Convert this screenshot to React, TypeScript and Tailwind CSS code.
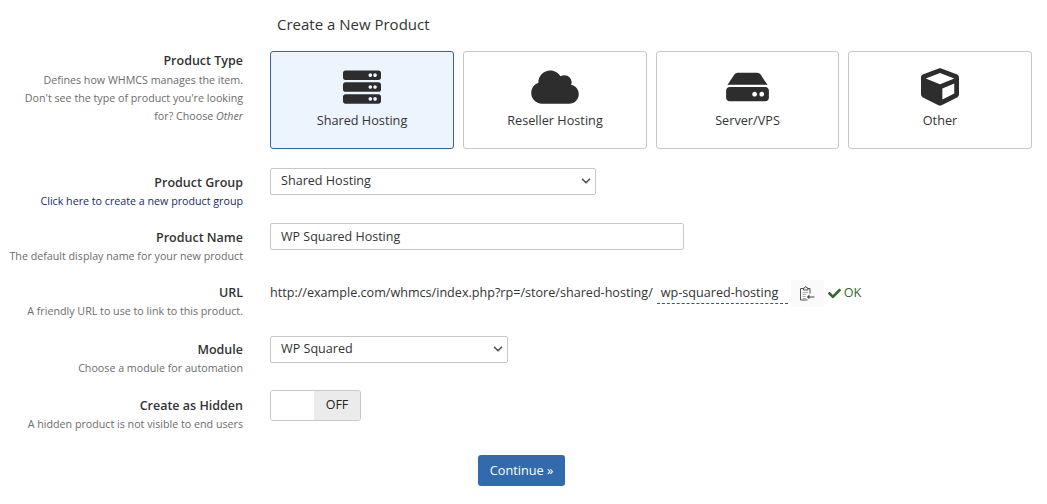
import { FaServer, FaCloud, FaHdd, FaCube, FaCheck } from "react-icons/fa";
import { ChevronDown } from "lucide-react";
import type { ReactNode } from "react";

const font = "font-['Open_Sans',sans-serif]";

function Label({ title, spaced, children }: { title: string; spaced?: boolean; children: ReactNode }) {
  return (
    <div className="w-[243px] shrink-0 text-right">
      <div className={`${spaced ? "mb-px" : ""} text-[12.5px] leading-[18px] font-semibold text-[#333]`}>{title}</div>
      <div className="text-[10.7px] leading-[18px] text-[#6c6c6c]">{children}</div>
    </div>
  );
}

function Select({ value, width }: { value: string; width: string }) {
  return (
    <div className={`relative ml-[27px] h-[27px] ${width}`}>
      <select className="h-full w-full appearance-none rounded-[2px] border border-[#c8c8c8] bg-white pl-[10px] text-[12.6px] text-[#333]">
        <option>{value}</option>
      </select>
      <ChevronDown className="pointer-events-none absolute top-[7px] right-[3px] h-[14px] w-[14px] text-[#555]" strokeWidth={3} />
    </div>
  );
}

function PasteIcon() {
  return (
    <svg viewBox="0 0 16 16" className="h-[16px] w-[16px]" fill="none" stroke="#555" strokeWidth="1">
      <path d="M11 8.5V3.5H9M4.5 3.5H1.5V15H8.5" />
      <path d="M4.5 5V3H5.5C5.7 1.2 7.8 1.2 8 3H9V5Z" fill="#f2f2f2" stroke="#444" strokeWidth="0.9" />
      <path d="M3.5 7.5H9M3.5 9.5H7M3.5 11.5H6.5M3.5 13.5H7" stroke="#999" strokeWidth="0.8" />
      <path d="M15.5 11.4H10.4V9.6L7.9 11.9L10.4 14.2V12.4H15.5Z" fill="#444" stroke="none" />
    </svg>
  );
}

const types = [
  { name: "Shared Hosting", icon: <FaServer className="h-[38px] w-[38px]" />, active: true, w: "w-[184px]" },
  { name: "Reseller Hosting", icon: <FaCloud className="h-[38px] w-[48px]" />, active: false, w: "w-[184px]" },
  { name: "Server/VPS", icon: <FaHdd className="h-[38px] w-[43px]" />, active: false, w: "w-[183px]" },
  { name: "Other", icon: <FaCube className="h-[38px] w-[38px]" />, active: false, w: "w-[184px]" },
];

export default function App() {
  return (
    <div className={`${font} h-[504px] w-[1047px] overflow-hidden bg-white text-[#333]`}>
      <h2 className="pt-[15px] pl-[277px] text-[15px] leading-[19px] font-normal text-[#333]">
        Create a New Product
      </h2>

      {/* Product type */}
      <div className="mt-[17px] flex">
        <div className="pt-px">
          <Label title="Product Type" spaced>
            Defines how WHMCS manages the item.
            <br />
            Don't see the type of product you're looking
            <br />
            for? Choose <em>Other</em>
          </Label>
        </div>
        <div className="ml-[27px] flex gap-[9px]">
          {types.map((t) => (
            <div
              key={t.name}
              className={`flex h-[98px] ${t.w} flex-col items-center rounded-[3px] border pt-[15px] ${
                t.active ? "border-[#336699] bg-[#ecf4fe]" : "border-[#c8c8c8] bg-white"
              }`}
            >
              <div className="flex h-[40px] items-center text-[#2d2d2d]">{t.icon}</div>
              <div className="mt-[4px] text-[12.7px] leading-[18px] text-[#333]">{t.name}</div>
            </div>
          ))}
        </div>
      </div>

      {/* Product group */}
      <div className="mt-[18px] flex">
        <div className="pt-[7px]">
          <Label title="Product Group">
            <a className="text-[#1a2a6c]">Click here to create a new product group</a>
          </Label>
        </div>
        <Select value="Shared Hosting" width="w-[326px]" />
      </div>

      {/* Product name */}
      <div className="mt-[13px] flex">
        <div className="pt-[6px]">
          <Label title="Product Name">The default display name for your new product</Label>
        </div>
        <input
          readOnly
          value="WP Squared Hosting"
          className="ml-[27px] h-[27px] w-[414px] rounded-[2px] border border-[#c8c8c8] bg-white px-[10px] text-[12.5px] text-[#333]"
        />
      </div>

      {/* URL */}
      <div className="mt-[18px] flex">
        <div className="pt-px">
          <Label title="URL">A friendly URL to use to link to this product.</Label>
        </div>
        <div className="ml-[27px] flex h-[20px] items-center text-[12.6px] text-[#333]">
          <span>http://example.com/whmcs/index.php?rp=/store/shared-hosting/</span>
          <span className="ml-[4px] w-[131px] border-b border-dashed border-[#2a5a8c] pl-[4px] leading-[21px]">
            wp-squared-hosting
          </span>
          <span className="ml-[3px] flex h-[27px] w-[33px] items-center justify-center bg-[#fafafa]">
            <PasteIcon />
          </span>
          <FaCheck className="ml-[4px] h-[13px] w-[13px] text-[#2e6b2e]" />
          <span className="ml-[3px] text-[#2e6b2e]">OK</span>
        </div>
      </div>

      {/* Module */}
      <div className="mt-[15px] flex">
        <div className="pt-[6px]">
          <Label title="Module">Choose a module for automation</Label>
        </div>
        <Select value="WP Squared" width="w-[238px]" />
      </div>

      {/* Hidden */}
      <div className="mt-[13px] flex">
        <div className="pt-[7px]">
          <Label title="Create as Hidden">A hidden product is not visible to end users</Label>
        </div>
        <div className="ml-[27px] flex h-[31px] w-[91px] overflow-hidden rounded-[3px] border border-[#c8c8c8]">
          <div className="w-[43px] bg-white" />
          <div className="flex flex-1 items-center justify-center bg-[#ebebeb] text-[12.5px] text-[#222]">
            OFF
          </div>
        </div>
      </div>

      <div className="mt-[22px] pl-[478px]">
        <button className="h-[31px] w-[87px] rounded-[3px] bg-[#336aad] text-[12.7px] text-white">
          Continue »
        </button>
      </div>
    </div>
  );
}
